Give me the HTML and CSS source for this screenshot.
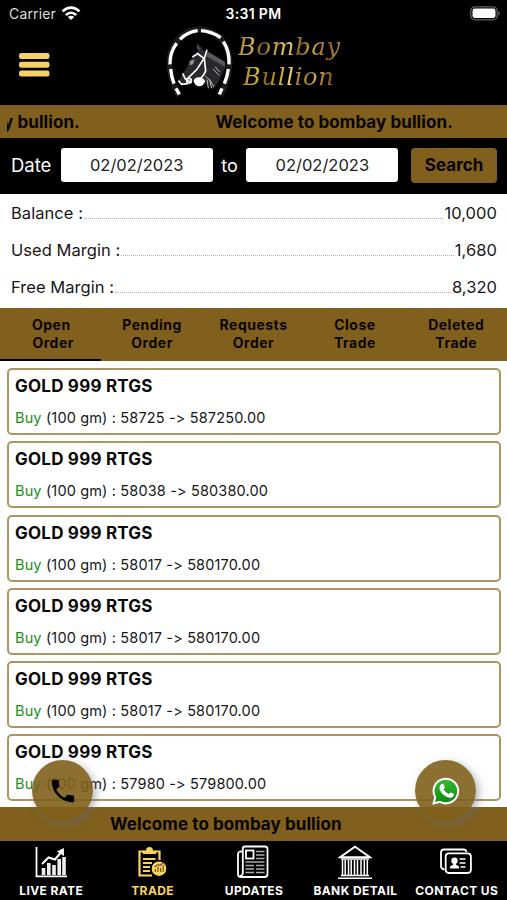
FILE: index.html
```html
<!DOCTYPE html>
<html lang="en">
<head>
<meta charset="utf-8">
<title>Bombay Bullion</title>
<link rel="stylesheet" href="styles.css">
</head>
<body>
<div class="app">
  <div class="status">
    <div class="carrier"><span>Carrier</span>
      <svg width="20" height="15" viewBox="0 0 20 15" fill="none" stroke="#fff" stroke-width="2.6"><path d="M1.5 5.4Q10-2.2 18.5 5.4M4.8 9Q10 4.5 15.2 9"/><path d="M10 14L6.8 11Q10 8.4 13.2 11Z" fill="#fff" stroke="none"/></svg>
    </div>
    <span class="clock">3:31 PM</span>
    <svg class="battery" width="31" height="15" viewBox="0 0 31 15"><rect x=".8" y=".8" width="26.4" height="13" rx="4" fill="none" stroke="#606060" stroke-width="1.3"/><rect x="2.5" y="2.5" width="23" height="9.6" rx="2.4" fill="#fff"/><path d="M28.4 5Q31.4 7.4 28.4 9.8Z" fill="#606060"/></svg>
  </div>
  <header class="header">
    <svg class="menu" width="31" height="24" viewBox="0 0 31 24" fill="#f7d066"><rect width="30.5" height="6" rx="2.3"/><rect y="8.8" width="30.5" height="6" rx="2.3"/><rect y="17.6" width="30.5" height="6" rx="2.3"/></svg>
    <div class="brand">
      <svg width="70" height="75" viewBox="45 15 210 225" fill="none">
        <path d="M87 225L74 198Q43 120 73 72Q100 26 148 25Q197 26 224 69Q254 120 223 198L211 225" stroke="#1d1d1d" stroke-width="17"/>
        <path d="M90 55Q112 33 143 29M153 29Q187 32 212 50M80 67Q59 95 60 130M220 62Q239 90 237 130M62 144Q64 168 72 188M235 144Q232 168 223 188M78 202L88 220M216 202L208 220" stroke="#fff" stroke-width="10"/>
        <path d="M142 67L154 79L160 88L176 92L225 123L226 138L207 180L190 204L169 187L144 197L128 181L115 192L94 192L85 180L94 165L112 137L120 116L143 95Z" fill="#29292c"/>
        <path d="M174 93L225 122L225 137L169 106Z" fill="#58585c"/>
        <path d="M142 68L151 86L141 83Z" fill="#55555a"/>
        <path d="M140 96L163 113L171 86M162 112L141 145L110 175M163 112L167 150L160 163L143 182M98 157L106 174L123 184M85 179L95 190L113 188M140 100L127 108" stroke="#fff" stroke-width="5"/>
        <path d="M119 121L134 115L129 130L119 133Z" fill="#949499"/>
        <circle cx="117" cy="179" r="7" stroke="#fff" stroke-width="5"/>
        <path d="M131 180Q132 170 148 169Q162 171 165 181Q159 197 147 196Q134 194 131 180Z" fill="#fff"/>
        <path d="M166 166Q182 174 192 198M171 176L175 202M178 174L185 202M189 144L207 163M195 137L209 153" stroke="#bcbcc0" stroke-width="3"/>
      </svg>
      <div class="brand-name"><span class="gold">Bombay</span><span class="gold second">Bullion</span></div>
    </div>
  </header>
  <div class="ticker top"><span class="tail"><span>y bullion.</span></span><span class="full">Welcome to bombay bullion.</span></div>
  <div class="search">
    <span class="label">Date</span><div class="field">02/02/2023</div><span class="to">to</span><div class="field">02/02/2023</div><button class="go">Search</button>
  </div>
  <section class="summary">
    <div class="line"><span>Balance :</span><i></i><span class="num">10,000</span></div>
    <div class="line"><span>Used Margin :</span><i></i><span class="num">1,680</span></div>
    <div class="line"><span>Free Margin :</span><i></i><span class="num">8,320</span></div>
  </section>
  <nav class="tabs">
    <a class="active">Open&nbsp;<br>Order</a><a>Pending<br>Order</a><a>Requests<br>Order</a><a>Close<br>Trade</a><a>Deleted<br>Trade</a>
  </nav>
  <main class="orders">
    <article><h2>GOLD 999 RTGS</h2><p><b>Buy</b> (100 gm) : 58725 -&gt; 587250.00</p></article>
    <article><h2>GOLD 999 RTGS</h2><p><b>Buy</b> (100 gm) : 58038 -&gt; 580380.00</p></article>
    <article><h2>GOLD 999 RTGS</h2><p><b>Buy</b> (100 gm) : 58017 -&gt; 580170.00</p></article>
    <article><h2>GOLD 999 RTGS</h2><p><b>Buy</b> (100 gm) : 58017 -&gt; 580170.00</p></article>
    <article><h2>GOLD 999 RTGS</h2><p><b>Buy</b> (100 gm) : 58017 -&gt; 580170.00</p></article>
    <article><h2>GOLD 999 RTGS</h2><p><b>Buy</b> (100 gm) : 57980 -&gt; 579800.00</p></article>
  </main>
  <div class="ticker bottom"><span>Welcome to bombay bullion</span></div>
  <nav class="nav">
    <a><svg width="34" height="34" viewBox="0 0 34 34" fill="none" stroke="#fff"><path d="M2.500 2V31.400H33" stroke-width="1.800"/><path d="M9.500 30V23M14.800 30V18M20 30V20M25.200 30V14M30 30V12" stroke-width="3.600" stroke="#eee"/><path d="M8 19L14.500 12.500L21 14.500L28 6" stroke-width="2"/><path d="M23 6.500L29.800 3L30 11Z" fill="#fff" stroke="none"/></svg><span>LIVE RATE</span></a>
    <a class="selected"><svg width="34" height="34" viewBox="0 0 34 34" fill="none" stroke="#fbd35c" stroke-width="2.200"><path d="M9 6.500H4.500V30.500H17M20 6.500H24.500V15"/><path d="M8 5.500H11Q11 2 14.500 2T18 5.500H21V9H8Z" fill="#fbd35c" stroke="none"/><path d="M8 14H20.500M8 18H17M8 22H15M8 26H15"/><circle cx="24" cy="23.700" r="7.300" fill="#fbd35c" stroke="none"/><path d="M20.400 27V24M23 27V22M25.600 27V23M28.200 27V20M19.500 22L23 19.700L25 20.500L28 18" stroke="#6d5523" stroke-width="1.200"/></svg><span>TRADE</span></a>
    <a><svg width="34" height="34" viewBox="0 0 34 34" fill="none" stroke="#fff" stroke-width="1.800"><path d="M7 6.500H4Q2 7 2 9V29Q2 32 5 32H28.500Q31.500 32 31.500 29V4Q31.500 1.500 29 1.500H9Q6.800 1.500 6.800 4V28Q6.500 31 4 31"/><rect x="10" y="5.500" width="7.500" height="8"/><g stroke="#aaa" stroke-width="1.500"><path d="M20 6.500H28.500M20 10H28.500M20 13.500H28.500M9.500 17H28.500M9.500 20.500H18M20 20.500H28.500M9.500 24H18M20 24H28.500M9.500 27.500H18M20 27.500H28.500"/></g></svg><span>UPDATES</span></a>
    <a><svg width="34" height="34" viewBox="0 0 34 34" fill="none" stroke="#fff"><path d="M2 12.200L17 1.700L32 12.200Z" stroke-width="2"/><path d="M3 14H31M3 30.500H31M0 33.200H34" stroke-width="1.600"/><path d="M4.500 15V30M7.200 15V30M10.500 15V30M13.200 15V30M16.500 15V30M19.500 15V30M23 15V30M26.300 15V30M29.300 15V30" stroke-width="1.500"/></svg><span>BANK DETAIL</span></a>
    <a><svg width="34" height="34" viewBox="0 0 34 34" fill="none" stroke="#fff" stroke-width="1.800"><path d="M27.500 7Q27 4.500 24.500 4.500H5Q2 4.500 2 7.500V21Q2 24 5.500 24.500"/><rect x="6.700" y="8.400" width="25.200" height="19.600" rx="3.200"/><circle cx="15.500" cy="15.800" r="3.200" fill="#fff" stroke="none"/><path d="M11 23.500V21.500L14.200 19.500V17H16.800V19.500L20 21.500V23.500Z" fill="#fff" stroke="none"/><path d="M20.500 14H26.500M20.500 18H26.500M21.500 22H26.500" stroke-width="1.700"/></svg><span>CONTACT US</span></a>
  </nav>
  <div class="fab call"><svg width="30" height="30" viewBox="0 0 24 24"><path d="M6.600 10.800c1.400 2.800 3.800 5.100 6.600 6.600l2.200-2.200c.3-.3.7-.4 1-.2 1.100.4 2.300.6 3.600.6.600 0 1 .4 1 1V20c0 .6-.4 1-1 1C10.600 21 3 13.400 3 4c0-.6.4-1 1-1h3.500c.6 0 1 .4 1 1 0 1.200.2 2.500.6 3.600.1.300 0 .7-.2 1z" fill="#000"/></svg></div>
  <div class="fab whatsapp"><svg width="30" height="30" viewBox="0 0 30 30"><defs><linearGradient id="wa" x2="0" y2="1"><stop stop-color="#36bd31"/><stop offset="1" stop-color="#078b0b"/></linearGradient></defs><path d="M2.600 27.300L4.300 21.300A12.300 12.300 0 1 1 9 25.800Z" fill="url(#wa)" stroke="#fff" stroke-width="2"/><path d="M10.300 8.300C11 7.600 12.300 7.600 12.700 8.500L13.700 10.900Q13.900 11.600 12.500 13.200Q14.400 16.700 17.800 18Q19.300 16.200 19.900 16.400L22.600 17.700Q23.400 18.200 22.600 20Q21 22.500 17.500 21.400Q11.400 19.500 8.900 14Q7.700 10.800 10.300 8.300Z" fill="#fff"/></svg></div>
</div>
</body>
</html>
```
FILE: styles.css
```css
* { box-sizing: border-box; }
body { margin: 0; background: #fff; font-family: Inter, "Liberation Sans", sans-serif; font-feature-settings: "calt" 0; color: #171717; }
.app { position: relative; width: 507px; height: 900px; display: flex; flex-direction: column; overflow: hidden; }
.status { height: 27px; flex: none; background: #000; color: #fff; display: grid; grid-template-columns: 1fr auto 1fr; align-items: center; padding: 0 6px 0 9px; font-size: 14px; }
.carrier { display: flex; gap: 5px; align-items: center; color: #ddd; letter-spacing: .15px; }
.clock { font-weight: 600; font-size: 14px; letter-spacing: .3px; margin-right: 3px; }
.battery { justify-self: end; }
.header { height: 78px; flex: none; background: #000; display: flex; align-items: flex-start; padding-left: 19px; }
.menu { margin-top: 26px; }
.brand { display: flex; margin-left: 115px; margin-top: -2px; }
.brand svg { margin-top: 1px; }
.brand-name { display: flex; flex-direction: column; padding: 7px 0 0 3px; font: italic 24px/30px "DejaVu Serif", "Liberation Serif", serif; letter-spacing: .8px; }
.gold { color: transparent; background: linear-gradient(105deg, #8c6418 0%, #dfbd55 14%, #8d6520 23%, #d6ae4b 39%, #eed57d 47%, #93702a 56%, #d4a645 70%, #8a611e 82%, #d9b754 100%); -webkit-background-clip: text; background-clip: text; padding-right: 5px; }
.second { margin-left: 5px; }
.ticker { flex: none; background: #80601c; color: #080400; font-weight: 700; }
.top { height: 33px; display: flex; align-items: center; font-size: 17px; letter-spacing: .08px; padding-left: 7px; }
.tail { width: 208.5px; overflow: hidden; white-space: nowrap; }
.tail span { margin-left: -4px; }
.search { height: 56px; flex: none; background: #000; display: flex; align-items: center; padding: 0 10px 2px 11px; color: #fff; font-size: 18px; }
.label { width: 50px; font-size: 18.5px; }
.field { width: 152px; height: 34px; border-radius: 3px; background: #fff; color: #222; display: grid; place-items: center; font-size: 16.5px; }
.to { width: 34px; text-align: center; }
.go { margin-left: 13px; width: 86px; height: 35px; border: 0; border-radius: 4px; padding: 0; background: #80601c; color: #080400; font: 700 17px Inter, sans-serif; }
.summary { height: 114px; flex: none; padding: 1px 10px 0 11px; font-size: 16.5px; letter-spacing: .05px; }
.line { height: 36.7px; display: flex; align-items: center; }
.line i { flex: 1; height: 12px; margin: 0 1px; border-bottom: 1px dotted #aaa; }
.tabs { height: 53px; flex: none; background: #80601c; display: grid; grid-template-columns: repeat(5, 1fr); }
.tabs a { padding-top: 8px; font-size: 14px; line-height: 17.5px; font-weight: 700; text-align: center; color: #0b0500; letter-spacing: .5px; }
.tabs .active { border-bottom: 2px solid #000; }
.tabs a.active { padding-left: 5px; }
.orders { height: 446px; flex: none; padding: 7px 6px 0 7px; display: flex; flex-direction: column; gap: 6.3px; overflow: hidden; }
article { height: 67px; flex: none; border: 2px solid #ac9563; border-radius: 5px; padding: 6px 6px; }
h2 { margin: 0; font-size: 17px; line-height: 20px; font-weight: 700; letter-spacing: .22px; color: #080808; }
p { margin: 12px 0 0; font-size: 14.5px; line-height: 19px; letter-spacing: .15px; }
p b { color: #169316; font-weight: 400; }
.bottom { height: 34px; padding-left: 110px; font-size: 17px; letter-spacing: .08px; line-height: 34px; }
.nav { height: 59px; flex: none; background: #000; color: #fff; display: grid; grid-template-columns: repeat(5, 1fr); }
.nav a { display: flex; flex-direction: column; align-items: center; padding-top: 4px; font-size: 12px; font-weight: 700; white-space: nowrap; }
.nav span { line-height: 15px; margin-top: 4px; margin-left: 1px; letter-spacing: .4px; }
.selected { color: #fbd35c; }
.fab { position: absolute; top: 760px; width: 61px; height: 61px; border-radius: 50%; background: rgba(128, 96, 28, .9); display: grid; place-items: center; box-shadow: 3px 3px 9px rgba(100, 110, 130, .5); }
.call { left: 32px; }
.whatsapp { left: 415px; }
```
